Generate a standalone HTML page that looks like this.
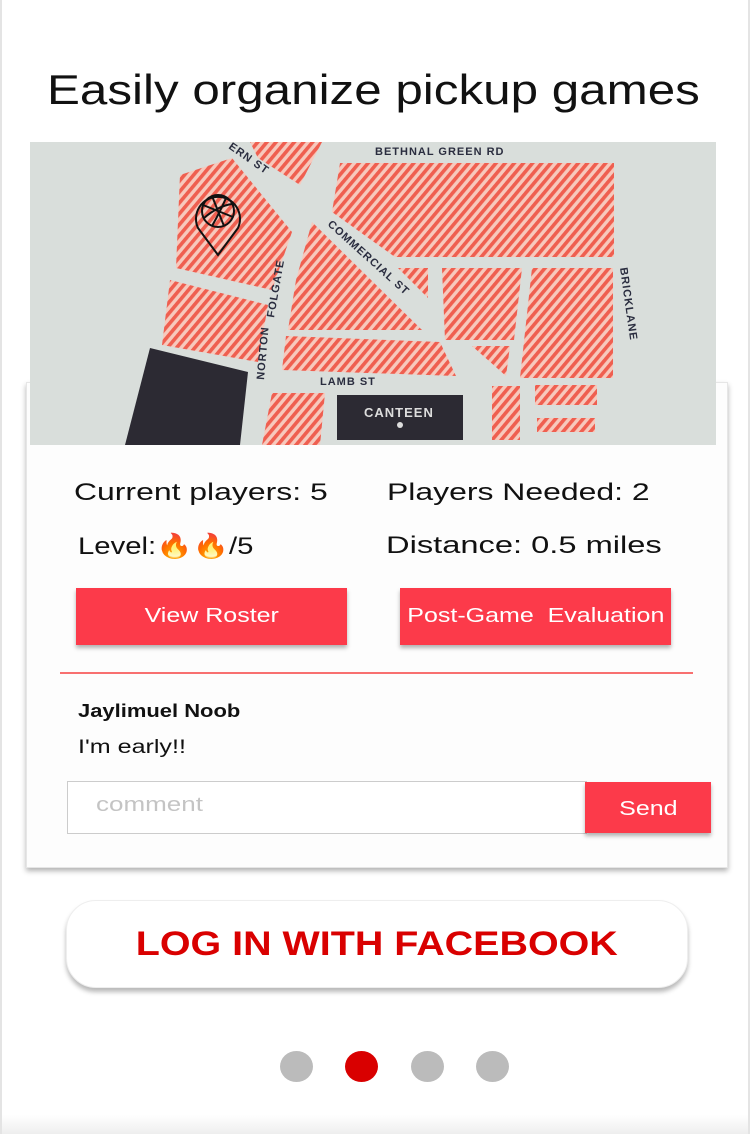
<!DOCTYPE html>
<html><head><meta charset="utf-8"><style>
*{margin:0;padding:0;box-sizing:border-box}
body{width:750px;height:1134px;background:#fff;position:relative;overflow:hidden;font-family:"Liberation Sans",sans-serif;color:#111}
.frame{position:absolute;left:0;top:0;width:750px;height:1134px;border-left:2px solid #e4e4e4;border-right:2px solid #e4e4e4;background:linear-gradient(#fff 1115px,#eee 1134px)}
h1{position:absolute;left:47px;top:66px;font-weight:400;font-size:42px;color:#111;white-space:nowrap;transform:scaleX(1.175);transform-origin:left top}
.card{position:absolute;left:26px;top:382px;width:702px;height:486px;background:#fdfdfd;box-shadow:0 3px 5px rgba(0,0,0,.3);border:1px solid #e6e6e6}
.map{position:absolute;left:30px;top:142px;width:686px;height:303px}
.t{position:absolute;font-size:24px;color:#111;white-space:nowrap;transform:scaleX(1.33);transform-origin:left top}
.btn{position:absolute;background:#fc3a4a;color:#fff;font-size:20px;text-align:center;box-shadow:0 3px 4px rgba(0,0,0,.3)}
.btn span{display:inline-block;transform:scaleX(1.25)}
.sx{display:inline-block;white-space:nowrap;transform-origin:left top}
</style></head><body>
<div class="frame"></div>
<h1>Easily organize pickup games</h1>
<div class="card"></div>
<svg class="map" viewBox="30 142 686 303" xmlns="http://www.w3.org/2000/svg">
<defs><pattern id="h" width="7" height="7" patternUnits="userSpaceOnUse" patternTransform="rotate(40)"><rect width="7" height="7" fill="#f7c9bd"/><rect width="3.6" height="7" fill="#ef5f50"/></pattern></defs>
<rect x="30" y="142" width="686" height="303" fill="#d9dedb"/>
<g fill="url(#h)">
<polygon points="250,142 322,142 300,185 258,158"/>
<polygon points="180,175 232,158 292,232 272,290 176,268"/>
<polygon points="170,280 268,305 258,362 162,345"/>
<polygon points="340,163 614,163 614,257 395,257 332,212"/>
<polygon points="312,222 422,330 288,330 296,280"/>
<polygon points="398,268 428,268 428,298"/>
<polygon points="442,268 522,268 514,340 445,340"/>
<polygon points="532,268 613,268 613,378 520,378"/>
<polygon points="286,336 440,342 456,376 282,370"/>
<polygon points="472,346 510,346 506,376"/>
<polygon points="272,393 325,393 320,445 262,445"/>
<polygon points="492,386 520,386 520,440 492,440"/>
<polygon points="535,385 597,385 597,405 535,405"/>
<polygon points="537,418 595,418 595,432 537,432"/>
</g>
<polygon points="150,348 248,372 240,445 125,445" fill="#2c2a33"/>
<rect x="337" y="395" width="126" height="45" fill="#2c2a33"/>
<circle cx="400" cy="425" r="3" fill="#ddd"/>
<g fill="#2a2d3f" font-family="Liberation Sans" font-weight="700" font-size="11" letter-spacing="1">
<text x="375" y="155">BETHNAL GREEN RD</text>
<text x="364" y="417" fill="#ddd" font-size="13">CANTEEN</text>
<text x="320" y="385">LAMB ST</text>
<text transform="translate(327,225) rotate(42)">COMMERCIAL ST</text>
<text transform="translate(274,318) rotate(-80)">FOLGATE</text>
<text transform="translate(264,380) rotate(-85)">NORTON</text>
<text transform="translate(620,268) rotate(82)">BRICKLANE</text>
<text transform="translate(228,148) rotate(35)">ERN ST</text>
</g>
<g fill="none" stroke="#111" stroke-width="2">
<path d="M218,255 L198,228 A22,22 0 1 1 238,228 Z"/>
<circle cx="218" cy="211" r="16"/>
<path d="M203,205 L233,217 M212,196 L224,226 M204,218 Q218,206 232,204 M212,226 Q220,212 226,198"/>
</g>
</svg>
<div class="t" style="left:74px;top:479px">Current players: 5</div>
<div class="t" style="left:387px;top:479px">Players Needed: 2</div>
<div class="t" style="left:78px;top:532px;transform:scaleX(1.22)">Level:🔥🔥/5</div>
<div class="t" style="left:386px;top:532px;transform:scaleX(1.36)">Distance: 0.5 miles</div>
<div class="btn" style="left:76px;top:588px;width:271px;height:57px;line-height:56px"><span>View Roster</span></div>
<div class="btn" style="left:400px;top:588px;width:271px;height:57px;line-height:56px"><span>Post-Game&nbsp; Evaluation</span></div>
<div style="position:absolute;left:60px;top:672px;width:633px;height:2px;background:#f87070"></div>
<div style="position:absolute;left:78px;top:701px;font-size:18px;font-weight:700;color:#111"><span class="sx" style="transform:scaleX(1.22)">Jaylimuel Noob</span></div>
<div style="position:absolute;left:78px;top:737px;font-size:19px;color:#111"><span class="sx" style="transform:scaleX(1.32)">I'm early!!</span></div>
<div style="position:absolute;left:67px;top:781px;width:520px;height:53px;border:1px solid #ccc;background:#fff;color:#c4c4c4;font-size:20px;padding:12px 0 0 28px"><span class="sx" style="transform:scaleX(1.3)">comment</span></div>
<div class="btn" style="left:585px;top:782px;width:126px;height:51px;line-height:54px"><span>Send</span></div>
<div style="position:absolute;left:66px;top:900px;width:622px;height:88px;border-radius:30px;background:#fff;box-shadow:0 4px 5px rgba(0,0,0,.28);border:1px solid #eee;text-align:center;line-height:86px;font-size:34px;font-weight:700;color:#d90000"><span style="display:inline-block;transform:scaleX(1.16)">LOG IN WITH FACEBOOK</span></div>
<div style="position:absolute;left:280px;top:1051px;width:33px;height:31px;border-radius:50%;background:#bbb"></div>
<div style="position:absolute;left:345px;top:1051px;width:33px;height:31px;border-radius:50%;background:#d90000"></div>
<div style="position:absolute;left:411px;top:1051px;width:33px;height:31px;border-radius:50%;background:#bbb"></div>
<div style="position:absolute;left:476px;top:1051px;width:33px;height:31px;border-radius:50%;background:#bbb"></div>
</body></html>
